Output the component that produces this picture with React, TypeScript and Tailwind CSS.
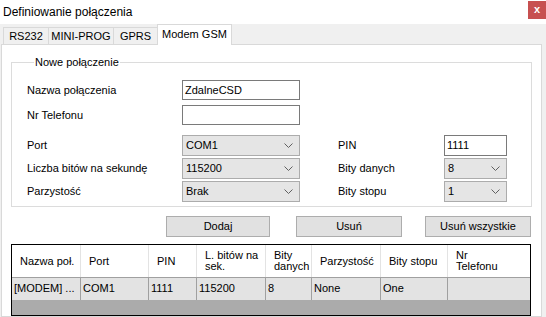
import React from "react";

// =============================================================================
// SMALL CONTROLS
// =============================================================================

function TextBox({ value, width }: { value: string; width: string }) {
  return (
    <div
      className={`${width} h-[20px] shrink-0 border border-[#7a7a7a] bg-white pl-[2px] leading-[18px] text-black`}
    >
      {value}
    </div>
  );
}

function Chevron() {
  return (
    <svg width="9" height="6" viewBox="0 0 9 6" aria-hidden="true" className="shrink-0">
      <polyline points="0.5,0.5 4.5,4.5 8.5,0.5" fill="none" stroke="#606060" strokeWidth="1" />
    </svg>
  );
}

function ComboBox({ value, width }: { value: string; width: string }) {
  return (
    <div
      className={`${width} h-[21px] shrink-0 flex items-center justify-between border border-[#acacac] bg-[#e5e5e5] pl-[3px] pr-[6px]`}
    >
      <span className="leading-[19px]">{value}</span>
      <Chevron />
    </div>
  );
}

function Button({ label, width, className }: { label: string; width: string; className: string }) {
  return (
    <button
      type="button"
      className={`${width} ${className} h-[21px] shrink-0 border border-[#adadad] bg-[#e1e1e1] text-center leading-[19px]`}
    >
      {label}
    </button>
  );
}

// =============================================================================
// DATA
// =============================================================================

const tabs = [
  { label: "RS232", width: "w-[45px]" },
  { label: "MINI-PROG", width: "w-[65px]" },
  { label: "GPRS", width: "w-[44px]" },
];

const headers = ["Nazwa poł.", "Port", "PIN", "L. bitów na sek.", "Bity danych", "Parzystość", "Bity stopu", "Nr Telefonu"];
const headerLines: string[][] = [
  ["Nazwa poł."],
  ["Port"],
  ["PIN"],
  ["L. bitów na", "sek."],
  ["Bity", "danych"],
  ["Parzystość"],
  ["Bity stopu"],
  ["Nr", "Telefonu"],
];
const row = ["[MODEM] ...", "COM1", "1111", "115200", "8", "None", "One", ""];

// =============================================================================
// APP
// =============================================================================

export default function App() {
  return (
    <div className="w-[546px] h-[317px] overflow-hidden bg-[#f0f0f0] flex flex-col font-['Liberation_Sans',Arial,sans-serif] text-[11px] text-black">
      {/* Title bar */}
      <div className="h-[24px] shrink-0 bg-white flex items-start justify-between">
        <span className="pl-[3px] pt-[5px] text-[12px] leading-[15px]">Definiowanie połączenia</span>
        <div className="mt-[1px] w-[18px] h-[18px] bg-[#c75050] text-white text-[11px] font-bold leading-[16px] text-center">
          x
        </div>
      </div>

      {/* Tabs */}
      <div className="h-[20px] shrink-0 flex items-end pl-[3px]">
        {tabs.map((t) => (
          <div
            key={t.label}
            className={`${t.width} h-[17px] border-l border-t border-[#d9d9d9] bg-[#f0f0f0] text-center leading-[16px]`}
          >
            {t.label}
          </div>
        ))}
        <div className="relative z-10 -mb-px w-[75px] h-[21px] border-x border-t border-[#d9d9d9] bg-white text-center leading-[19px]">
          Modem GSM
        </div>
      </div>

      {/* Tab page */}
      <div className="ml-[1px] w-[541px] flex-1 border border-[#d9d9d9] bg-white flex flex-col">
        <fieldset className="mt-[10px] ml-[9px] w-[521px] border border-[#dcdcdc] pl-[15px] pb-[4px] pt-[11px]">
          <legend className="ml-[7px] px-[1px] leading-[14px]">Nowe połączenie</legend>

          <div className="flex items-center">
            <span className="w-[155px] shrink-0">Nazwa połączenia</span>
            <TextBox value="ZdalneCSD" width="w-[118px]" />
          </div>
          <div className="mt-[5px] flex items-center">
            <span className="w-[155px] shrink-0">Nr Telefonu</span>
            <TextBox value="" width="w-[118px]" />
          </div>

          <div className="mt-[10px] flex items-center">
            <span className="w-[155px] shrink-0">Port</span>
            <ComboBox value="COM1" width="w-[118px]" />
            <span className="ml-[38px] w-[106px] shrink-0">PIN</span>
            <div className="w-[63px] h-[21px] shrink-0 border border-[#7a7a7a] bg-white pl-[2px] leading-[19px]">1111</div>
          </div>
          <div className="mt-[2px] flex items-center">
            <span className="w-[155px] shrink-0">Liczba bitów na sekundę</span>
            <ComboBox value="115200" width="w-[118px]" />
            <span className="ml-[38px] w-[106px] shrink-0">Bity danych</span>
            <ComboBox value="8" width="w-[63px]" />
          </div>
          <div className="mt-[2px] flex items-center">
            <span className="w-[155px] shrink-0">Parzystość</span>
            <ComboBox value="Brak" width="w-[118px]" />
            <span className="ml-[38px] w-[106px] shrink-0">Bity stopu</span>
            <ComboBox value="1" width="w-[63px]" />
          </div>
        </fieldset>

        {/* Buttons */}
        <div className="mt-[9px] flex">
          <Button label="Dodaj" width="w-[104px]" className="ml-[164px]" />
          <Button label="Usuń" width="w-[106px]" className="ml-[26px]" />
          <Button label="Usuń wszystkie" width="w-[106px]" className="ml-[23px]" />
        </div>

        {/* Grid of connections */}
        <div className="mt-[7px] ml-[9px] w-[520px] flex-1 border border-black bg-[#ababab]">
          <div className="grid grid-cols-[68px_68px_48px_69px_46px_69px_67px_1fr] h-[33px] bg-white border-b border-[#a0a0a0]">
            {headerLines.map((lines, i) => (
              <div
                key={headers[i]}
                className={`flex flex-col justify-center pl-[8px] leading-[11px] ${i > 0 ? "border-l border-[#e3e3e3]" : ""}`}
              >
                {lines.map((l) => (
                  <span key={l}>{l}</span>
                ))}
              </div>
            ))}
          </div>
          <div className="grid grid-cols-[68px_68px_48px_69px_46px_69px_67px_1fr] h-[22px] bg-[#e3e3e3]">
            {row.map((c, i) => (
              <div
                key={i}
                className={`pl-[2px] leading-[21px] whitespace-nowrap overflow-hidden ${i > 0 ? "border-l border-[#a0a0a0]" : ""}`}
              >
                {c}
              </div>
            ))}
          </div>
        </div>
      </div>
    </div>
  );
}
